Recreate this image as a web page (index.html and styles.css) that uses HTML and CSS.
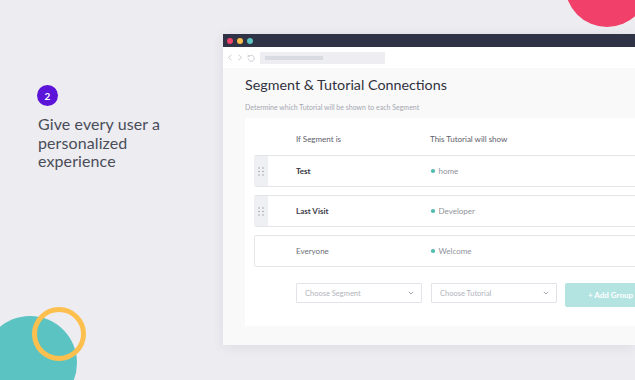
FILE: index.html
```html
<!DOCTYPE html>
<html>
<head>
<meta charset="utf-8">
<title>Segment & Tutorial Connections</title>
<link rel="stylesheet" href="styles.css">
</head>
<body>
<div class="backdrop">
  <div class="deco deco-pink"></div>
  <div class="deco deco-teal"></div>
  <div class="deco deco-ring"></div>
</div>
<div class="stage">
  <section class="intro">
    <div class="badge">2</div>
    <h1 class="headline">Give every user a<br>personalized<br>experience</h1>
  </section>
  <div class="browser">
    <div class="titlebar">
      <span class="wdot red"></span><span class="wdot yellow"></span><span class="wdot teal"></span>
    </div>
    <div class="toolbar">
      <div class="nav">
        <svg width="6" height="7" viewBox="0 0 6 7"><path d="M4.5 0.8 L1.5 3.5 L4.5 6.2" fill="none" stroke="#c9ccd4" stroke-width="1"/></svg>
        <svg width="6" height="7" viewBox="0 0 6 7"><path d="M1.5 0.8 L4.5 3.5 L1.5 6.2" fill="none" stroke="#c9ccd4" stroke-width="1"/></svg>
        <svg width="8" height="8" viewBox="0 0 8 8"><path d="M2 2.2 A3 3 0 1 1 1.2 4.6" fill="none" stroke="#c9ccd4" stroke-width="1"/><path d="M0.6 0.8 L2.4 2.4 L0.4 3.2" fill="none" stroke="#c9ccd4" stroke-width="1"/></svg>
      </div>
      <div class="url"><span class="url-text"></span></div>
    </div>
    <div class="content">
      <h2 class="title">Segment &amp; Tutorial Connections</h2>
      <p class="sub">Determine which Tutorial will be shown to each Segment</p>
      <div class="card">
        <div class="head-row">
          <span class="col-seg">If Segment is</span>
          <span class="col-tut">This Tutorial will show</span>
        </div>
        <div class="row">
          <div class="handle"><svg width="6" height="9" viewBox="0 0 6 9"><g fill="#9a9ea8"><circle cx="1" cy="1" r="0.75"/><circle cx="5" cy="1" r="0.75"/><circle cx="1" cy="4.5" r="0.75"/><circle cx="5" cy="4.5" r="0.75"/><circle cx="1" cy="8" r="0.75"/><circle cx="5" cy="8" r="0.75"/></g></svg></div>
          <span class="col-seg seg-strong">Test</span>
          <span class="col-tut"><i class="tdot"></i>home</span>
        </div>
        <div class="row">
          <div class="handle"><svg width="6" height="9" viewBox="0 0 6 9"><g fill="#9a9ea8"><circle cx="1" cy="1" r="0.75"/><circle cx="5" cy="1" r="0.75"/><circle cx="1" cy="4.5" r="0.75"/><circle cx="5" cy="4.5" r="0.75"/><circle cx="1" cy="8" r="0.75"/><circle cx="5" cy="8" r="0.75"/></g></svg></div>
          <span class="col-seg seg-mid">Last Visit</span>
          <span class="col-tut"><i class="tdot"></i>Developer</span>
        </div>
        <div class="row">
          <span class="col-seg seg-light">Everyone</span>
          <span class="col-tut"><i class="tdot"></i>Welcome</span>
        </div>
        <div class="controls">
          <div class="select"><span>Choose Segment</span><svg width="6" height="4" viewBox="0 0 6 4"><path d="M0.8 0.8 L3 3 L5.2 0.8" fill="none" stroke="#9aa0aa" stroke-width="0.9"/></svg></div>
          <div class="select"><span>Choose Tutorial</span><svg width="6" height="4" viewBox="0 0 6 4"><path d="M0.8 0.8 L3 3 L5.2 0.8" fill="none" stroke="#9aa0aa" stroke-width="0.9"/></svg></div>
          <button class="add">+ Add Group</button>
        </div>
      </div>
    </div>
  </div>
</div>
</body>
</html>
```

FILE: styles.css
```css
* { box-sizing: border-box; }
html, body {
  margin: 0;
  padding: 0;
}
body {
  width: 635px;
  height: 380px;
  overflow: hidden;
  position: relative;
  background: #ececf1;
  font-family: "Lato", "Noto Sans", sans-serif;
  color: #3d3f4a;
}
.backdrop {
  position: absolute;
  inset: 0;
  overflow: hidden;
}
.deco { position: absolute; border-radius: 50%; }
.deco-pink {
  left: 565px; top: -57px;
  width: 84px; height: 84px;
  background: #f1416a;
}
.deco-teal {
  left: -17px; top: 316px;
  width: 94px; height: 94px;
  background: #5bc3c1;
}
.deco-ring {
  left: 32px; top: 307px;
  width: 54px; height: 54px;
  border: 5.5px solid #fdc04e;
}
.stage {
  display: flex;
  align-items: flex-start;
  position: relative;
  width: 635px;
}
.intro {
  width: 223px;
  flex: none;
  padding: 85px 0 0 37px;
}
.badge {
  width: 21px; height: 21px;
  border-radius: 50%;
  background: #5b14d8;
  color: #fff;
  font-size: 10px;
  font-weight: 700;
  display: flex;
  align-items: center;
  justify-content: center;
}
.headline {
  margin: 9px 0 0 1px;
  font-size: 16px;
  line-height: 18.5px;
  letter-spacing: 0.1px;
  font-weight: 400;
  color: #4a4c58;
}
.browser {
  margin-top: 34px;
  width: 412px;
  flex: none;
  overflow: hidden;
  background: #f9f9fa;
  box-shadow: 0 2px 12px rgba(40, 44, 70, 0.08);
}
.titlebar {
  height: 13px;
  background: #2f3345;
  display: flex;
  align-items: center;
  gap: 4px;
  padding-left: 4px;
}
.wdot { width: 6px; height: 6px; border-radius: 50%; }
.red { background: #f14268; }
.yellow { background: #fcc04c; }
.teal { background: #5bc3c1; }
.toolbar {
  height: 21px;
  background: #fff;
  display: flex;
  align-items: center;
  padding-left: 4px;
}
.nav { display: flex; align-items: center; gap: 4px; width: 33px; }
.url {
  width: 125px; height: 12px;
  background: #eeeef2;
  border-radius: 1px;
  display: flex;
  align-items: center;
  padding-left: 5px;
}
.url-text { width: 58px; height: 4px; background: #d9dbe2; }
.content {
  height: 277px;
  padding: 7px 0 0 22px;
}
.title {
  margin: 0;
  font-size: 14.3px;
  line-height: 20px;
  font-weight: 400;
  color: #30323d;
}
.sub {
  margin: 7px 0 0;
  font-size: 7px;
  line-height: 10px;
  color: #a4a7b0;
}
.card {
  margin-top: 6px;
  width: 430px;
  background: #fff;
  padding: 0 0 19px 9px;
}
.head-row {
  height: 37px;
  padding-top: 5px;
  display: flex;
  align-items: center;
  font-size: 8px;
  color: #5e606b;
}
.col-seg { width: 134px; flex: none; }
.head-row .col-seg { margin-left: 42px; }
.row {
  height: 32px;
  margin-bottom: 8px;
  border: 1px solid #e5e6ea;
  border-radius: 2px;
  display: flex;
  align-items: center;
  font-size: 8px;
}
.handle {
  width: 14px;
  height: 30px;
  background: #eef0f4;
  display: flex;
  align-items: center;
  justify-content: center;
  margin-left: -1px;
}
.row .col-seg { margin-left: 41px; }
.handle + .col-seg { margin-left: 28px; }
.seg-strong { color: #333540; font-weight: 700; }
.seg-mid { color: #3f414c; font-weight: 700; }
.seg-light { color: #6c6e78; }
.col-tut { color: #8f929b; display: flex; align-items: center; }
.head-row .col-tut { color: #5e606b; }
.tdot {
  width: 3.5px; height: 3.5px;
  border-radius: 50%;
  background: #54bdb2;
  margin: 0 4px 0 1px;
}
.controls {
  display: flex;
  align-items: flex-start;
  margin-top: 16px;
  padding-left: 42px;
}
.select {
  width: 126px;
  height: 20px;
  border: 1px solid #e2e3e8;
  border-radius: 1px;
  display: flex;
  align-items: center;
  justify-content: space-between;
  padding: 0 7px 0 8px;
  font-size: 7.5px;
  color: #b2b4bc;
  margin-right: 9px;
}
.select + .select { margin-right: 8px; }
.add {
  width: 90px;
  flex: none;
  height: 24px;
  border: 0;
  border-radius: 2px;
  background: #b4e4e2;
  color: #fff;
  font-family: inherit;
  font-size: 8px;
  font-weight: 700;
  text-align: left;
  padding-left: 23px;
}
```
